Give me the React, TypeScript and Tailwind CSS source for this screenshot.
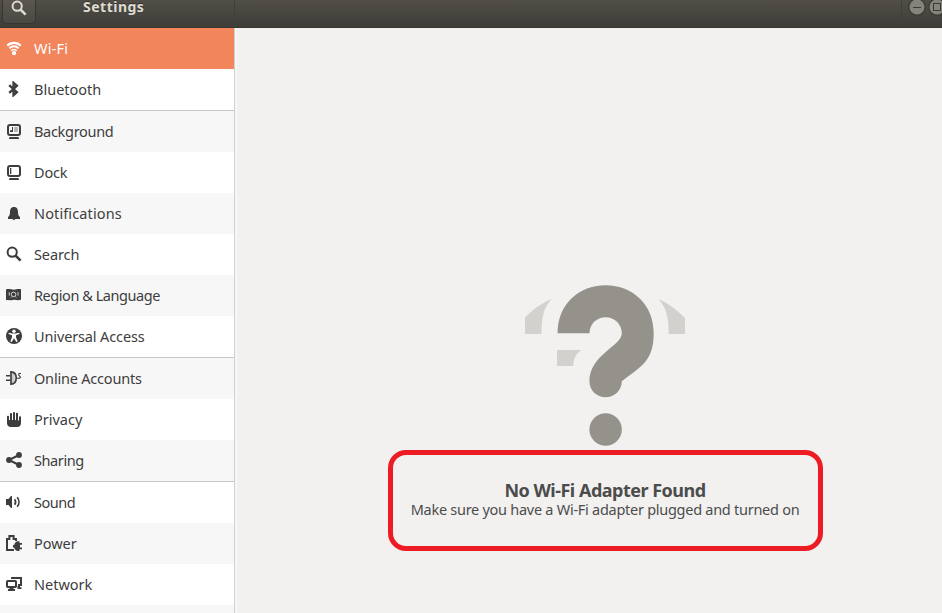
import type { ReactNode } from "react";

type Row = { label: string; spacing: string; bg: string; icon: ReactNode; divider?: boolean };

const line = { fill: "none", stroke: "currentColor", strokeWidth: 2 } as const;

const SearchGlyph = () => (
  <g {...line}>
    <circle cx="6.2" cy="6.2" r="4.6" />
    <path d="M9.5 9.5L14.6 14.6" strokeWidth="2.5" />
  </g>
);

const rows: Row[] = [
  {
    label: "Wi-Fi", spacing: "tracking-[0.2px]", bg: "bg-[#f2855b] text-white",
    icon: (
      <>
        <g {...line}>
          <path d="M1.3 5.8C4.8 1.9 11.2 1.9 14.7 5.8" strokeWidth="2.1" />
          <path d="M3.4 8.4C6 5.6 10 5.6 12.6 8.4" strokeWidth="1.9" />
          <path d="M5.2 10.7C6.8 9 9.2 9 10.8 10.7" strokeWidth="1.5" />
        </g>
        <circle cx="8" cy="13.1" r="2.2" />
      </>
    ),
  },
  {
    label: "Bluetooth", spacing: "tracking-normal", bg: "bg-white", divider: true,
    icon: <path {...line} strokeWidth="2.3" d="M3.2 4.2L10.9 11.2L7.5 14.2V1.8L10.9 4.8L3.2 11.8" />,
  },
  {
    label: "Background", spacing: "tracking-[-0.3px]", bg: "bg-[#f7f7f7]",
    icon: (
      <>
        <rect {...line} x="2" y="2" width="12" height="10" rx="2" />
        <path d="M4 9V7.5L6 7V4H7V9ZM3 15.3C3 14.3 4 14 5 14H11C12 14 13 14.3 13 15.3V16H3Z" />
        <path d="M8 4H12V9H8Z" opacity=".35" />
      </>
    ),
  },
  {
    label: "Dock", spacing: "tracking-[-0.2px]", bg: "bg-white",
    icon: (
      <>
        <rect {...line} x="2" y="2" width="12" height="10" rx="2" />
        <path d="M4 4H5.3V10H4ZM3 15.3C3 14.3 4 14 5 14H11C12 14 13 14.3 13 15.3V16H3Z" />
      </>
    ),
  },
  {
    label: "Notifications", spacing: "tracking-[0.12px]", bg: "bg-[#f7f7f7]",
    icon: <path d="M8 2C5 2 4 4.2 4 7C4 9.7 3.3 11 2 12V14H14V12C12.7 11 12 9.7 12 7C12 4.2 11 2 8 2ZM6.5 14H9.5L8 15.3Z" />,
  },
  { label: "Search", spacing: "tracking-[-0.1px]", bg: "bg-white", icon: <SearchGlyph /> },
  {
    label: "Region & Language", spacing: "tracking-[-0.45px]", bg: "bg-[#f7f7f7]",
    icon: (
      <>
        <path d="M0 2.5C3 1.4 5 2.7 8 2.7C10.5 2.7 12 1.5 15 2.3V12.8C12 13.8 10 12.7 8 12.8C5 13.8 3 12.3 0 13.2Z" />
        <g fill="none" stroke="#f7f7f7" strokeWidth=".8">
          <circle cx="7.6" cy="7.4" r="2.3" />
          <path d="M3.3 5.2V8.6M12 5.2V8.6M5.8 9.6L5 10.6M9.5 9.6L10.2 10.6" />
        </g>
      </>
    ),
  },
  {
    label: "Universal Access", spacing: "tracking-[-0.13px]", bg: "bg-white", divider: true,
    icon: (
      <>
        <circle cx="8" cy="8" r="8" />
        <g fill="white">
          <circle cx="8" cy="3.3" r="1.7" />
          <path d="M2.8 4.7L6.2 5.4H9.8L13.2 4.7L13.5 6L10 7.2V9.2L11.7 13.5L10.3 14L8 10.2L5.7 14L4.3 13.5L6 9.2V7.2L2.5 6Z" />
        </g>
      </>
    ),
  },
  {
    label: "Online Accounts", spacing: "tracking-[-0.2px]", bg: "bg-[#f7f7f7]",
    icon: (
      <>
        <path {...line} strokeWidth="1.7" d="M5 1.9C8.5 2 10.2 4.5 10.2 8C10.2 11.5 8.5 14 5 14.1Z" />
        <path d="M6 3H8.5V13H6Z" opacity=".25" />
        <path d="M0 5H4V6.6H0ZM0 9.4H4V11H0Z" />
        <path {...line} strokeWidth="1.1" d="M10.8 8.2H13.6L14.5 7.2L12.7 5L13 3.5H15" />
      </>
    ),
  },
  {
    label: "Privacy", spacing: "tracking-normal", bg: "bg-white",
    icon: <path d="M1 5.5C1 4.5 3 4.5 3 5.5V9H4V3C4 1.8 6 1.8 6 3V9H7V2C7 .8 9 .8 9 2V9H10V2.6C10 1.4 12 1.4 12 2.6V9.5H13V6C13 5 15 5 15 6V12C15 14.5 13.5 16 11 16H5C2.5 16 1 14.5 1 12Z" />,
  },
  {
    label: "Sharing", spacing: "tracking-[-0.4px]", bg: "bg-[#f7f7f7]", divider: true,
    icon: (
      <>
        <path {...line} d="M13 3L3 8L13 13" />
        <circle cx="13" cy="3" r="2.9" /><circle cx="3" cy="8" r="2.9" /><circle cx="13" cy="13" r="2.9" />
      </>
    ),
  },
  {
    label: "Sound", spacing: "tracking-[-0.5px]", bg: "bg-white",
    icon: (
      <>
        <path d="M0 5H2.5L5 2H6V14H5L2.5 11H0Z" />
        <path {...line} strokeWidth="1.7" d="M8.6 5.2C9.9 7 9.9 9 8.6 10.8M11.2 3.2C13.5 6 13.5 10 11.2 12.8" />
      </>
    ),
  },
  {
    label: "Power", spacing: "tracking-[-0.05px]", bg: "bg-[#f7f7f7]",
    icon: (
      <>
        <path {...line} d="M8 15H1V4H3.4V1H7.6V4H10V6" />
        <path d="M7 10H8.2C8.6 8 10.2 6.3 12 6.3H13.5V8H16V9.8H14V12.5H16V14.2H13.5V16H12C10.2 16 8.6 14.5 8.2 12.4H7Z" />
      </>
    ),
  },
  {
    label: "Network", spacing: "tracking-normal", bg: "bg-white",
    icon: (
      <>
        <path {...line} d="M6 3V2H15V9H12" />
        <rect {...line} x="1" y="5" width="9" height="6" rx=".7" />
        <path d="M3.5 11.5H7.5V13H9V15H2V13H3.5ZM11.5 10H14V11.3H15.5V13H11.5Z" />
      </>
    ),
  },
];

function WindowButton({ children }: { children: ReactNode }) {
  return (
    <svg className="size-[18px] shrink-0" viewBox="0 0 18 18" fill="none" stroke="#3b3a35">
      <circle cx="9" cy="9" r="8.2" fill="#85837b" strokeWidth="1.3" />
      {children}
    </svg>
  );
}

function Header() {
  return (
    <header className="flex h-7 shrink-0 border-b border-[#383732] bg-linear-to-b from-[#504e46] to-[#3e3d38] text-[#dfdbd2]">
      <div className="flex h-full w-[235px] shrink-0 border-r border-[#403e39]">
        <div className="ml-[2px] h-6 w-[34px] rounded-b-[5px] border border-t-0 border-[#37362f] bg-white/5 pl-2">
          <svg className="size-4" viewBox="0 0 16 16"><SearchGlyph /></svg>
        </div>
        <h1 className="ml-[47px] text-[14px] font-bold leading-[14px] tracking-[0.5px] [text-shadow:0_-1px_#30302c]">Settings</h1>
      </div>
      <div className="ml-auto flex h-[22px] w-[41px] overflow-hidden border-l border-[#403e39] pl-[6px]">
        <div className="mt-[-2px] flex shrink-0 gap-[2px]">
          <WindowButton><path d="M5 9.5H13" /></WindowButton>
          <WindowButton><rect x="5.5" y="5.5" width="7" height="7" /></WindowButton>
        </div>
      </div>
    </header>
  );
}

function Sidebar() {
  return (
    <nav className="flex w-[235px] shrink-0 flex-col overflow-hidden border-r border-[#d3d0cc] bg-[#f7f7f7] text-[14.5px] text-[#3d3d3d]">
      {rows.map((row) => (
        <div key={row.label} className={`flex shrink-0 gap-3 pl-[6px] pt-3 ${row.bg} ${row.divider ? "h-[42px] border-b border-[#cac6c2]" : "h-[41px]"}`}>
          <svg className="size-4 shrink-0" viewBox="0 0 16 16" fill="currentColor">{row.icon}</svg>
          <span className={`-mt-[2px] whitespace-nowrap leading-5 ${row.spacing}`}>{row.label}</span>
        </div>
      ))}
    </nav>
  );
}

function EmptyState() {
  return (
    <main className="min-w-0 flex-1 overflow-hidden border-l-2 border-[#f8f7f7] bg-[#f2f1f0]">
      <div className="flex w-[737px] flex-col items-center pt-[257px] text-[#4c4c4c]">
        <svg className="h-[161px] w-[161px]" viewBox="0 0 161 161" fill="#95928c">
          <g fill="#d2d1cd">
            <path d="M26.6 14C17 18 8 24 0 32.6V49H16.5C16.5 34 18 23 26.6 14Z" />
            <path d="M133.4 14C143 18 152 25 160 33V49H143.7C143.7 34 142 23 133.4 14Z" />
            <path d="M32 65H56.5C51 68.5 48.3 74 48.3 81H32Z" />
          </g>
          <path d="M32.6 48.3C32.6 20 53 .3 80.6 .3S128.7 20 128.7 48.3C128.7 77 115 82 96.8 96.3C96.8 105.3 89.6 112.3 80.6 112.3S64.4 105.3 64.4 96.3C64.4 70 96.8 61 96.8 48.3C96.8 39 89.6 32.2 80.6 32.2S64.5 39 64.5 48.3Z" />
          <circle cx="80.6" cy="144.5" r="16.2" />
        </svg>
        <section className="mt-1 flex h-[101px] w-[435px] flex-col items-center rounded-[18px] border-[5px] border-[#ed1c24] pt-[25px] pr-px">
          <h2 className="whitespace-nowrap text-[18px] font-bold leading-5 tracking-[-0.5px]">No Wi-Fi Adapter Found</h2>
          <p className="-mt-px whitespace-nowrap text-[14.5px] leading-5 tracking-[-0.27px]">Make sure you have a Wi-Fi adapter plugged and turned on</p>
        </section>
      </div>
    </main>
  );
}

export default function App() {
  return (
    <div className="flex h-[613px] w-[942px] flex-col overflow-hidden font-['Noto_Sans',sans-serif]">
      <Header />
      <div className="flex min-h-0 flex-1">
        <Sidebar />
        <EmptyState />
      </div>
    </div>
  );
}
